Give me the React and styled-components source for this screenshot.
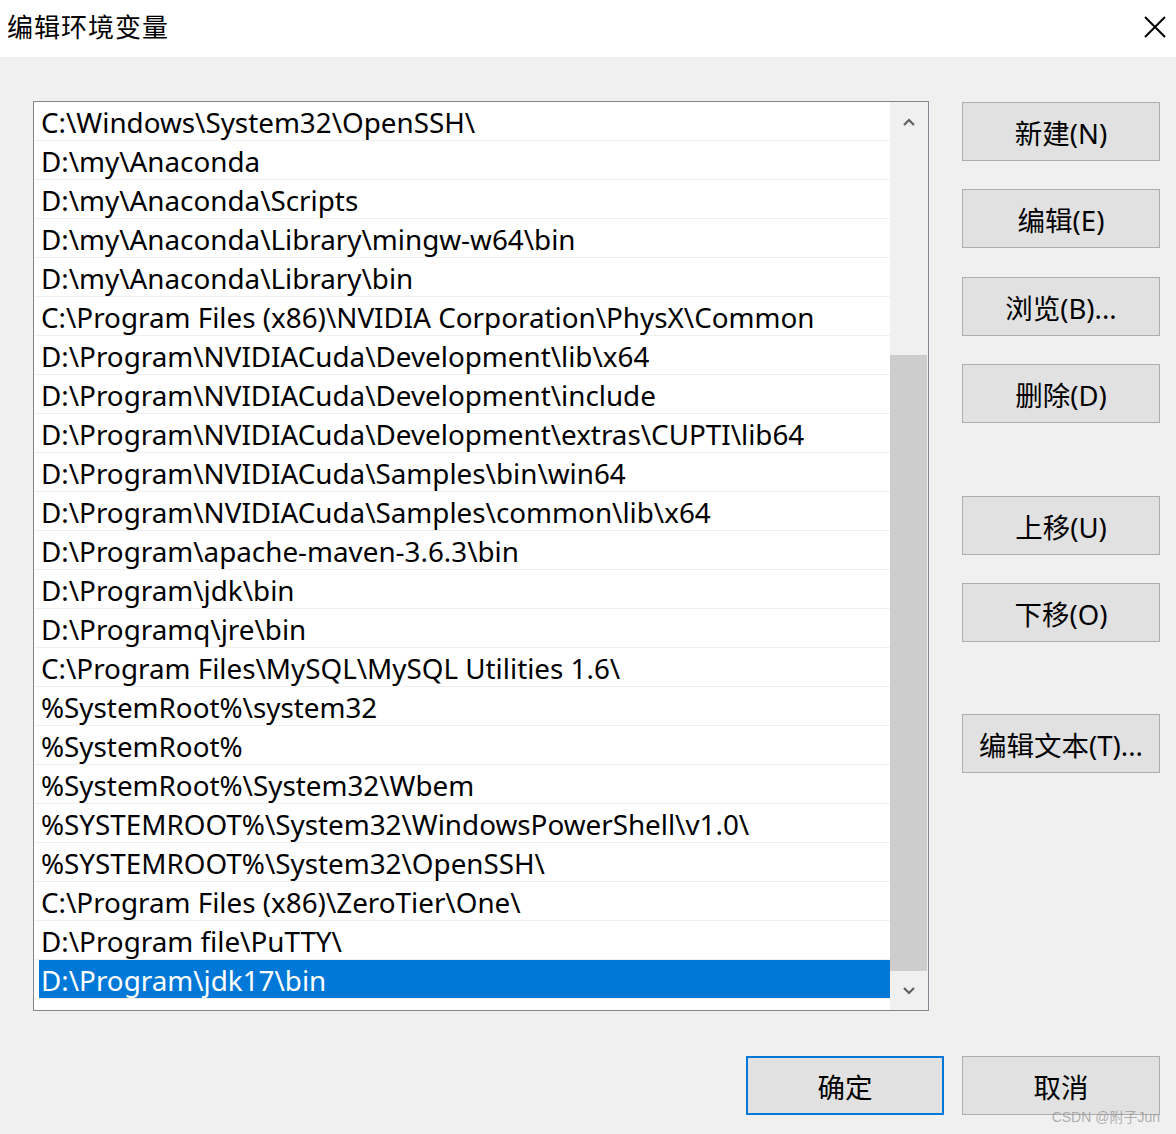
import React from "react";
import styled, { createGlobalStyle } from "styled-components";

const paths = [
	"C:\\Windows\\System32\\OpenSSH\\",
	"D:\\my\\Anaconda",
	"D:\\my\\Anaconda\\Scripts",
	"D:\\my\\Anaconda\\Library\\mingw-w64\\bin",
	"D:\\my\\Anaconda\\Library\\bin",
	"C:\\Program Files (x86)\\NVIDIA Corporation\\PhysX\\Common",
	"D:\\Program\\NVIDIACuda\\Development\\lib\\x64",
	"D:\\Program\\NVIDIACuda\\Development\\include",
	"D:\\Program\\NVIDIACuda\\Development\\extras\\CUPTI\\lib64",
	"D:\\Program\\NVIDIACuda\\Samples\\bin\\win64",
	"D:\\Program\\NVIDIACuda\\Samples\\common\\lib\\x64",
	"D:\\Program\\apache-maven-3.6.3\\bin",
	"D:\\Program\\jdk\\bin",
	"D:\\Programq\\jre\\bin",
	"C:\\Program Files\\MySQL\\MySQL Utilities 1.6\\",
	"%SystemRoot%\\system32",
	"%SystemRoot%",
	"%SystemRoot%\\System32\\Wbem",
	"%SYSTEMROOT%\\System32\\WindowsPowerShell\\v1.0\\",
	"%SYSTEMROOT%\\System32\\OpenSSH\\",
	"C:\\Program Files (x86)\\ZeroTier\\One\\",
	"D:\\Program file\\PuTTY\\",
	"D:\\Program\\jdk17\\bin",
];

const selected = paths.length - 1;

const sideButtons = [
	{ label: "新建(N)", gap: 0 },
	{ label: "编辑(E)", gap: 28 },
	{ label: "浏览(B)...", gap: 29 },
	{ label: "删除(D)", gap: 28 },
	{ label: "上移(U)", gap: 73 },
	{ label: "下移(O)", gap: 28 },
	{ label: "编辑文本(T)...", gap: 72 },
];

const GlobalStyle = createGlobalStyle`
	html, body {
		margin: 0;
		padding: 0;
		background: #f0f0f0;
	}
	body {
		font-family: "Noto Sans", "Noto Sans CJK SC", sans-serif;
	}
`;

function Chevron({ up }) {
	return (
		<svg width="12" height="8" viewBox="0 0 12 8">
			<polyline
				points={up ? "1,7 6,2 11,7" : "1,1 6,6 11,1"}
				fill="none"
				stroke="#606060"
				strokeWidth="2.2"
			/>
		</svg>
	);
}

function App() {
	return (
		<>
			<GlobalStyle />
			<Window>
				<TitleBar>
					<Title>编辑环境变量</Title>
					<Close>
						<svg width="22" height="22" viewBox="0 0 22 22">
							<path d="M1 1 L21 21 M21 1 L1 21" stroke="#000" strokeWidth="2" />
						</svg>
					</Close>
				</TitleBar>

				<Body>
					<ListBox>
						<Rows>
							{paths.map((p, i) => (
								<Row key={p} $active={i === selected}>
									{p}
								</Row>
							))}
						</Rows>
						<ScrollBar>
							<Arrow>
								<Chevron up />
							</Arrow>
							<Track $offset={214}>
								<Thumb />
							</Track>
							<Arrow>
								<Chevron />
							</Arrow>
						</ScrollBar>
					</ListBox>

					<SideColumn>
						{sideButtons.map((b) => (
							<Button key={b.label} $gap={b.gap}>
								{b.label}
							</Button>
						))}
					</SideColumn>
				</Body>

				<Footer>
					<Button $default>确定</Button>
					<Button>取消</Button>
				</Footer>

				<Watermark>CSDN @附子Jun</Watermark>
			</Window>
		</>
	);
}

const Window = styled.div`
	position: relative;
	width: 1176px;
	height: 1134px;
	background: #f0f0f0;
	overflow: hidden;
`;

const TitleBar = styled.div`
	height: 57px;
	background: #fff;
	display: flex;
	align-items: center;
	justify-content: space-between;
	padding: 0 10px 6px 7px;
	box-sizing: border-box;
`;

const Title = styled.div`
	font-family: "Noto Sans CJK SC", sans-serif;
	font-size: 26px;
	color: #000;
	letter-spacing: 1px;
`;

const Close = styled.div`
	width: 22px;
	height: 22px;
	display: flex;
	margin-top: 2px;
`;

const Body = styled.div`
	display: flex;
	align-items: flex-start;
	padding: 44px 16px 0 33px;
	gap: 33px;
`;

const ListBox = styled.div`
	width: 896px;
	height: 910px;
	box-sizing: border-box;
	border: 1px solid #828790;
	background: #fff;
	display: flex;
`;

const Rows = styled.div`
	flex: 1;
	display: flex;
	flex-direction: column;
`;

const Row = styled.div`
	height: 39px;
	box-sizing: border-box;
	border-bottom: 1px solid #f0f0f0;
	display: flex;
	align-items: center;
	padding-left: ${(p) => (p.$active ? "2px" : "7px")};
	margin-left: ${(p) => (p.$active ? "5px" : "0")};
	background: ${(p) => (p.$active ? "#0078d7" : "transparent")};
	color: ${(p) => (p.$active ? "#fff" : "#000")};
	font-size: 27.8px;
	white-space: nowrap;
	padding-top: 1px;
`;

const ScrollBar = styled.div`
	width: 38px;
	background: #f0f0f0;
	display: flex;
	flex-direction: column;
`;

const Arrow = styled.div`
	height: 39px;
	display: flex;
	align-items: center;
	justify-content: center;
	padding-right: 1px;
`;

const Track = styled.div`
	flex: 1;
	display: flex;
	flex-direction: column;
	padding-top: ${(p) => p.$offset}px;
`;

const Thumb = styled.div`
	flex: 1;
	background: #cdcdcd;
	margin-right: 1px;
`;

const SideColumn = styled.div`
	display: flex;
	flex-direction: column;
	padding-top: 1px;
`;

const Button = styled.button`
	width: 198px;
	height: 59px;
	margin-top: ${(p) => (p.$gap ? `${p.$gap}px` : "0")};
	box-sizing: border-box;
	background: #e1e1e1;
	border: ${(p) => (p.$default ? "2px solid #0078d7" : "1px solid #adadad")};
	font-family: "Noto Sans", "Noto Sans CJK SC", sans-serif;
	font-size: 27.5px;
	color: #000;
	padding: 0;
	display: flex;
	align-items: center;
	justify-content: center;
`;

const Footer = styled.div`
	display: flex;
	justify-content: flex-end;
	gap: 18px;
	padding: 45px 16px 0 0;
`;

const Watermark = styled.div`
	position: absolute;
	right: 16px;
	bottom: 8px;
	font-family: "Liberation Sans", "Noto Sans CJK SC", sans-serif;
	font-size: 14px;
	color: rgba(150, 150, 150, 0.75);
`;

export default App;
